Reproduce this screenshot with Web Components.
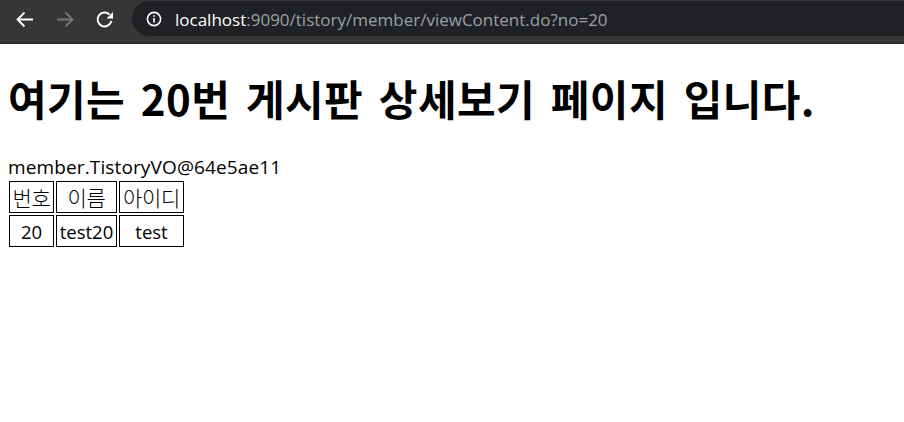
<!DOCTYPE html>
<html lang="ko">
<head>
<meta charset="utf-8">
<title>viewContent</title>
<style>
html, body { margin: 0; background: #fff; }
body { width: 904px; height: 422px; overflow: hidden; font-family: "Open Sans", "Noto Sans CJK KR", sans-serif; }
</style>
</head>
<body>
<browser-bar url-host="localhost" url-rest=":9090/tistory/member/viewContent.do?no=20"></browser-bar>
<page-content>
    <h-title>여기는 20번 게시판 상세보기 페이지 입니다.</h-title>
    <member-info text="member.TistoryVO@64e5ae11"></member-info>
    <member-table no="20" name="test20" user="test"></member-table>
</page-content>
<script>
customElements.define(
    'browser-bar',
    class extends HTMLElement {
        connectedCallback() {
            this.attachShadow({ mode: 'open' });
            const host = this.getAttribute('url-host');
            const rest = this.getAttribute('url-rest');
            this.shadowRoot.innerHTML = /* html */ `
                <style>
                    :host {
                        display: flex;
                        align-items: center;
                        height: 42px;
                        background: #363636;
                        border-bottom: 2px solid #2b2b2b;
                        padding-left: 15px;
                    }
                    svg { display: block; flex: none; }
                    .nav { display: flex; align-items: center; gap: 20px; margin-right: 17px; margin-top: -4px; }
                    .omni {
                        flex: 1;
                        display: flex;
                        align-items: center;
                        height: 35px;
                        margin-top: -5px;
                        background: #202124;
                        border-radius: 18px 0 0 18px;
                        padding-left: 14px;
                        font: 17px "Open Sans", sans-serif;
                        color: #9aa0a6;
                        white-space: nowrap;
                    }
                    .omni svg { margin-right: 13px; margin-top: 1px; }
                    .omni span { padding-top: 1px; }
                    b { font-weight: 400; color: #fff; }
                </style>
                <div class="nav">
                    <svg width="20" height="20" viewBox="0 0 20 20" fill="none" stroke="#fff" stroke-width="1.8"><path d="M18 10.5H2.5M9.5 3.5l-7 7 7 7"/></svg>
                    <svg width="20" height="20" viewBox="0 0 20 20" fill="none" stroke="#75767a" stroke-width="1.8"><path d="M2 10.5h15.5M10.5 3.5l7 7-7 7"/></svg>
                    <svg width="20" height="20" viewBox="0 0 20 20" fill="none" stroke="#fff" stroke-width="1.9"><path d="M14.6 5.6A7 7 0 1 0 16.4 12"/><path d="M18 3v6.4h-6.4z" fill="#fff" stroke="none"/></svg>
                </div>
                <div class="omni">
                    <svg width="16" height="16" viewBox="0 0 16 16" fill="none"><circle cx="8" cy="8" r="6.6" stroke="#fff" stroke-width="1.6"/><path d="M7.2 7h1.6v4.6H7.2zM7.2 4.2h1.6v1.6H7.2z" fill="#fff"/></svg>
                    <span><b>${host}</b>${rest}</span>
                </div>
            `;
        }
    }
);

customElements.define(
    'page-content',
    class extends HTMLElement {
        connectedCallback() {
            this.attachShadow({ mode: 'open' });
            this.shadowRoot.innerHTML = /* html */ `
                <style>
                    :host {
                        display: block;
                        padding: 0 8px;
                        color: #000;
                        font: 19px "Open Sans", "Noto Sans CJK KR", sans-serif;
                    }
                </style>
                <slot></slot>
            `;
        }
    }
);

customElements.define(
    'h-title',
    class extends HTMLElement {
        connectedCallback() {
            this.attachShadow({ mode: 'open' });
            this.shadowRoot.innerHTML = /* html */ `
                <style>
                    :host {
                        display: block;
                        padding: 24px 0 27px;
                        font: 700 42px/60px "Noto Sans CJK KR", sans-serif;
                        word-spacing: 3.5px;
                        letter-spacing: 0.42px;
                        white-space: nowrap;
                    }
                </style>
                <slot></slot>
            `;
        }
    }
);

customElements.define(
    'member-info',
    class extends HTMLElement {
        connectedCallback() {
            this.attachShadow({ mode: 'open' });
            this.shadowRoot.innerHTML = /* html */ `
                <style>
                    :host { display: block; line-height: 24px; letter-spacing: 0.13px; }
                </style>
                <span>${this.getAttribute('text')}</span>
            `;
        }
    }
);

customElements.define(
    'member-table',
    class extends HTMLElement {
        connectedCallback() {
            this.attachShadow({ mode: 'open' });
            this.shadowRoot.innerHTML = /* html */ `
                <style>
                    :host { display: block; margin-left: -1px; }
                    table { border-spacing: 2px; border-collapse: separate; font: inherit; font-size: 18.5px; table-layout: fixed; width: 175px; }
                    td {
                        border: 1px solid #000;
                        padding: 2px 0 0;
                        text-align: center;
                        height: 32px;
                        box-sizing: border-box;
                        line-height: 24px;
                        white-space: nowrap;
                    }
                    .a { width: 45px; }
                    .b { width: 61px; }
                    .c { width: 65px; }
                    .head td { padding: 1px 0; font-family: "Noto Sans CJK KR", sans-serif; font-weight: 300; font-size: 21px; letter-spacing: -0.3px; color: #000; }
                </style>
                <table>
                    <colgroup><col class="a"><col class="b"><col class="c"></colgroup>
                    <tr class="head"><td>번호</td><td>이름</td><td>아이디</td></tr>
                    <tr><td>${this.getAttribute('no')}</td><td>${this.getAttribute('name')}</td><td>${this.getAttribute('user')}</td></tr>
                </table>
            `;
        }
    }
);
</script>
</body>
</html>
